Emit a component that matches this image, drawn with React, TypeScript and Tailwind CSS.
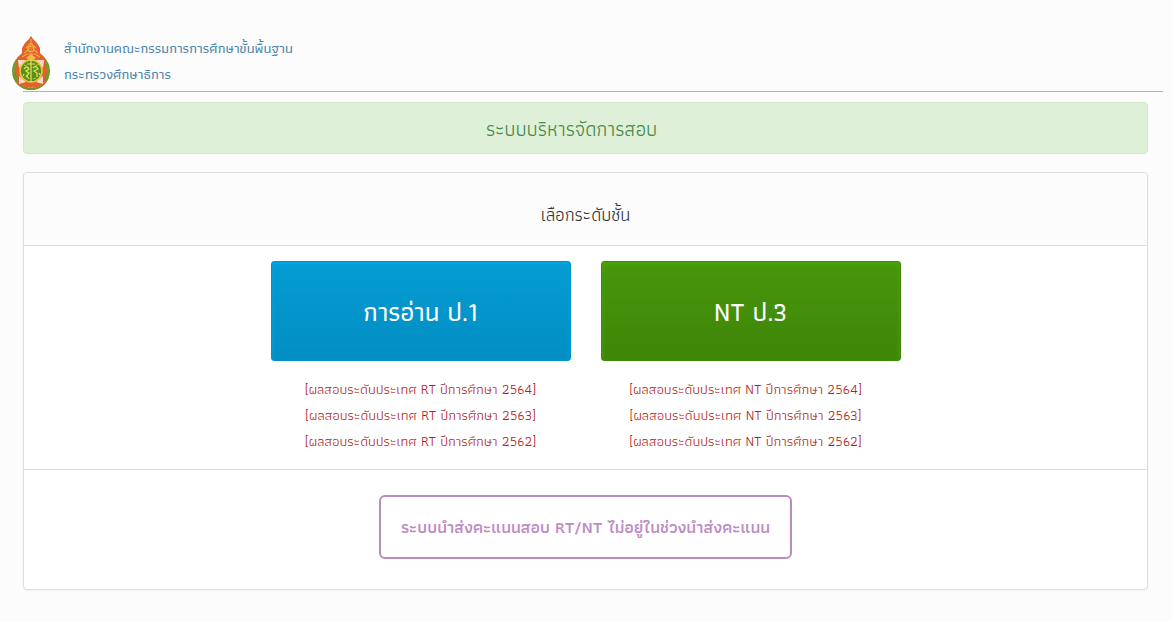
type Level = {
    title: string;
    code: string;
    button: string;
    list: string;
}

const levels: Level[] = [
    {
        title: "การอ่าน ป.1",
        code: "RT",
        button: "border-[#0291c7] bg-linear-to-b from-[#049cd3] to-[#028ec3] shadow-[inset_0_2px_4px_#00a5e6]",
        list: "",
    },
    {
        title: "NT ป.3",
        code: "NT",
        button: "border-[#408708] bg-linear-to-b from-[#47970c] to-[#3f8508] shadow-[inset_0_2px_4px_#4aa806]",
        list: "pr-2.5",
    },
];

const years = [2564, 2563, 2562];

function Emblem() {
    return (
        <svg viewBox="0 0 38 54" className="h-[54px] w-[38px] shrink-0" role="img" aria-label="สพฐ.">
            <circle cx="19" cy="35" r="19" fill="#629b25"/>
            <circle cx="19" cy="35" r="17" fill="none" stroke="#c08a35" strokeWidth="1.500" strokeDasharray="1 1"/>
            <path d="M1 40a18.500 18.500 0 0 0 36 0l-5-2a14 14 0 0 1-26 0z" fill="#78932a"/>
            <path d="M5 46q14 10 28 0" fill="none" stroke="#d5b84a" strokeWidth="1.500" strokeDasharray="2 1"/>
            <path d="M19 0l2 3 4 4 3 5v5l4 4 2 5-1 3 3 6-3 4v9l-8 3H13l-8-3v-9l-3-4 3-6-1-3 2-5 4-4v-5l3-5 4-4z" fill="#e4602c"/>
            <path d="M6 24l8 0-7 8zM32 24l-8 0 7 8zM7 48l0-8 7 6zM31 48l0-8-7 6z" fill="#fbd9cf"/>
            <path d="M19 3v6M14 12l5-5 5 5M12 17l4-3M26 17l-4-3M10 21l5-3h8l5 3" fill="none" stroke="#f0aa3f" strokeWidth="1.200"/>
            <circle cx="19" cy="13" r="3" fill="#e87a2d" stroke="#f4bd50"/>
            <path d="M14 22l5-4 5 4-5 3z" fill="#f3b94a"/>
            <circle cx="19" cy="35" r="11" fill="#568f1f" stroke="#f0c83c" strokeWidth="1.500"/>
            <path d="M19 24v22M15 28h8" fill="none" stroke="#e9df5b" strokeWidth="1.200"/>
            <path d="M12 33q3-4 5 0l-3 2 3 2-3 4M21 32q3-3 5 1l-4 2 3 2v4M12 38l-1 2M17 43l-2-3M27 37l1 2" fill="none" stroke="#e4dc49" strokeWidth="1.300"/>
            <path d="M12 29l3 1M23 30l4-2M21 43l3-1" fill="none" stroke="#b9d038"/>
        </svg>
    );
}

function Header() {
    return (
        <header className="pt-[35px] pl-3 pr-[9px]">
            <div className="flex gap-[14px]">
                <div className="pt-px"><Emblem/></div>
                <div className="text-[14px] leading-[26px] font-medium text-[#4a82a8]">
                    <p>สำนักงานคณะกรรมการการศึกษาขั้นพื้นฐาน</p>
                    <p>กระทรวงศึกษาธิการ</p>
                </div>
            </div>
            <div className="ml-[11px] mt-px h-px bg-[#a4cb5c]"/>
        </header>
    );
}

function LevelColumn({level}: { level: Level }) {
    return (
        <div className="w-[300px]">
            <button
                type="button"
                className={`flex h-[100px] w-full items-center justify-center rounded-[3px] border pt-0.5 text-[26px] font-medium text-white ${level.button}`}>
                {level.title}
            </button>
            <ul className={`mt-[15px] text-center text-[14px] leading-[26px] text-[#b01f1b] ${level.list}`}>
                {years.map((year) => (
                    <li key={year}>
                        <a href={`#${level.code}-${year}`}>[ผลสอบระดับประเทศ {level.code} ปีการศึกษา {year}]</a>
                    </li>
                ))}
            </ul>
        </div>
    );
}

export default function App() {
    return (
        <div className="min-h-screen bg-[#fcfcfc] font-['Athiti','Kanit','Noto_Sans_Thai','Noto_Sans',sans-serif] font-normal">
            <Header/>
            <main className="pt-2.5 pb-8 pl-[23px] pr-6">
                <h1 className="rounded-[4px] border border-[#d0e9c6] bg-[#dff0d8] pt-[13px] pr-[42px] pb-[11px] pl-[14px] text-center text-[20px] leading-[26px] text-[#468847]">
                    ระบบบริหารจัดการสอบ
                </h1>
                <section className="mt-[18px] rounded-[4px] border border-[#dddddd] bg-white shadow-xs">
                    <h2 className="rounded-t-[4px] border-b border-[#dddddd] bg-[#fcfcfc] pt-[29px] pb-[17px] text-center text-[18px] leading-[26px] text-[#333333]">
                        เลือกระดับชั้น
                    </h2>
                    <div className="flex flex-wrap justify-center gap-[30px] py-[15px]">
                        {levels.map((level) => <LevelColumn key={level.code} level={level}/>)}
                    </div>
                    <div className="flex justify-center border-t border-[#dddddd] px-4 pt-[25px] pb-[30px]">
                        <button
                            type="button"
                            className="min-h-16 rounded-md border-2 border-[#b98dbf] px-5 pt-0.5 text-[17px] font-semibold text-[#bd8cc3]">
                            ระบบนำส่งคะแนนสอบ RT/NT ไม่อยู่ในช่วงนำส่งคะแนน
                        </button>
                    </div>
                </section>
            </main>
        </div>
    );
}
